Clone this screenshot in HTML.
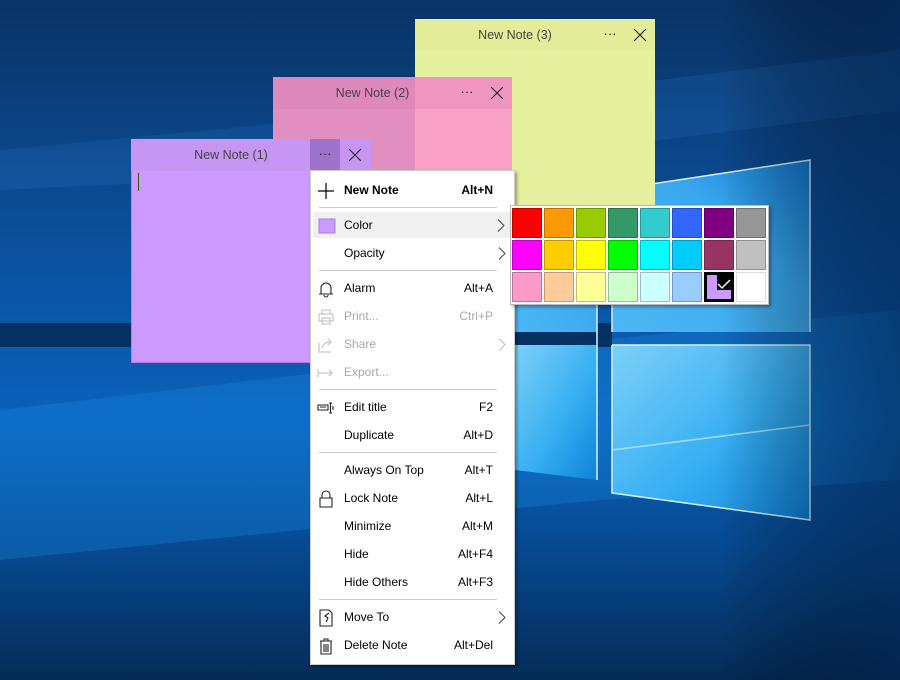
<!DOCTYPE html>
<html><head><meta charset="utf-8"><style>
*{margin:0;padding:0;box-sizing:border-box}
body{width:900px;height:680px;overflow:hidden;position:relative;font-family:"Liberation Sans",sans-serif;background:#0b4a92}
svg.bg{position:absolute;left:0;top:0}
.note{position:absolute}
.hdr{position:absolute;left:0;top:0;right:0;height:32px;font-size:12.5px;color:#444;text-align:center;line-height:32px}
.hdr .t{position:absolute;left:0;right:40px;text-align:center}
.btn{position:absolute;top:0;width:30px;height:32px;line-height:30px;text-align:center;font-size:13px;color:#222}
.btn svg{position:absolute;left:9px;top:10px}
.menu{position:absolute;left:310px;top:170px;width:205px;height:495px;background:#fff;border:1px solid #ccc;box-shadow:2px 2px 3px rgba(0,0,0,.35)}
.it{position:absolute;left:0;width:203px;height:26px;font-size:12px;color:#000;line-height:26px}
.it .l{position:absolute;left:33px}
.it .r{position:absolute;right:21px}
.it.dis{color:#a8a8a8}
.it svg{position:absolute;left:6px;top:5px}
.it svg.ch{left:auto;right:8px;top:7px}
.sep{position:absolute;left:8px;width:178px;height:1px;background:#ccc}
.pal{position:absolute;left:510px;top:205px;width:259px;height:100px;background:#fff;border:1px solid #bbb;box-shadow:2px 2px 3px rgba(0,0,0,.35)}
.c{position:absolute;width:30px;height:30px;border:1px solid rgba(0,0,0,.25)}
</style></head><body>
<svg class="bg" width="900" height="680" viewBox="0 0 900 680">
<defs>
<linearGradient id="g0" x1="0" y1="0" x2="0" y2="1">
<stop offset="0" stop-color="#0a3366"/><stop offset=".3" stop-color="#0b4c94"/><stop offset=".62" stop-color="#0a62bc"/><stop offset=".8" stop-color="#074a92"/><stop offset="1" stop-color="#052b56"/></linearGradient>
<linearGradient id="gr" x1="0" y1="0" x2="1" y2="0">
<stop offset="0" stop-color="#000" stop-opacity="0"/><stop offset=".8" stop-color="#000" stop-opacity="0"/><stop offset="1" stop-color="#03224a" stop-opacity=".6"/></linearGradient>
<linearGradient id="pane" x1="0" y1="1" x2="1" y2="0">
<stop offset="0" stop-color="#4cb8f5"/><stop offset=".6" stop-color="#3aa8ee"/><stop offset="1" stop-color="#1478cc"/></linearGradient>
<linearGradient id="pane2" x1="0" y1="0" x2="1" y2="1">
<stop offset="0" stop-color="#7dd0f8"/><stop offset=".55" stop-color="#38b0f2"/><stop offset="1" stop-color="#0d82d8"/></linearGradient>
</defs>
<rect width="900" height="680" fill="url(#g0)"/>
<polygon points="0,150 420,110 900,50 900,110 420,170 0,190" fill="#2a7fd0" opacity=".18"/>
<polygon points="0,410 600,340 900,310 900,480 600,500 0,560" fill="#1a8ae2" opacity=".3"/>
<rect x="0" y="323" width="612" height="24" fill="#052a55" opacity=".85"/>
<polygon points="515,205 597,190 597,332 515,332" fill="url(#pane)"/>
<polygon points="612,190 810,160 810,332 612,332" fill="url(#pane)"/>
<polygon points="515,345 597,345 597,480 515,470" fill="url(#pane2)"/>
<polygon points="612,345 810,345 810,520 612,493" fill="url(#pane2)"/>
<polyline points="612,332 612,190 810,160 810,332" fill="none" stroke="#d8f2ff" stroke-width="1.5"/>
<polyline points="612,345 810,345 810,520 612,493 612,345" fill="none" stroke="#d8f2ff" stroke-width="1.5"/>
<line x1="597" y1="190" x2="597" y2="480" stroke="#d8f2ff" stroke-width="1.5"/>
<line x1="612" y1="450" x2="810" y2="425" stroke="#bfe8ff" stroke-width="1.5" opacity=".8"/>
<rect width="900" height="680" fill="url(#gr)"/>
</svg>

<!-- Note 3 -->
<div class="note" style="left:415px;top:19px;width:240px;height:200px;background:#e6f1a0">
<div class="hdr" style="background:#e3ec98"><span class="t">New Note (3)</span>
<span class="btn" style="left:180px">···</span><span class="btn" style="left:210px"><svg width="12" height="12"><path d="M0 0L12 12M12 0L0 12" stroke="#222" stroke-width="1.1"/></svg></span></div></div>
<!-- Note 2 -->
<div class="note" style="left:273px;top:77px;width:239px;height:130px;background:#f9a1c4">
<div style="position:absolute;left:0;top:0;width:142px;height:130px;background:#e18ec0"></div>
<div class="hdr" style="background:rgba(220,120,170,.25)"><span class="t">New Note (2)</span>
<span class="btn" style="left:179px">···</span><span class="btn" style="left:209px"><svg width="12" height="12"><path d="M0 0L12 12M12 0L0 12" stroke="#222" stroke-width="1.1"/></svg></span></div></div>
<!-- Note 1 -->
<div class="note" style="left:131px;top:139px;width:240px;height:224px;background:#cc99ff;border:1px solid #b27ee0">
<div class="hdr" style="background:#c696f2;top:-1px;left:-1px;right:-1px"><span class="t">New Note (1)</span>
<span class="btn" style="left:179px;background:#9d74c9">···</span><span class="btn" style="left:209px"><svg width="12" height="12"><path d="M0 0L12 12M12 0L0 12" stroke="#222" stroke-width="1.1"/></svg></span></div>
<div style="position:absolute;left:6px;top:33px;width:1px;height:18px;background:#335500"></div>
</div>

<div class="menu">
<div class="it" style="top:6px;font-weight:bold"><svg width="18" height="18"><path d="M9 1v16M1 9h16" stroke="#000" stroke-width="1.2"/></svg><span class="l">New Note</span><span class="r">Alt+N</span></div>
<div class="sep" style="top:36px"></div>
<div class="it" style="top:41px;background:#f0f0f0;left:2px;width:198px"><svg width="18" height="18" style="left:5px"><rect x="1" y="2" width="16" height="14" fill="#cc99ff" stroke="#a87fe0"/></svg><span class="l" style="left:31px">Color</span><svg class="ch" width="8" height="13" style="right:6px"><path d="M1 0.5L7 6.5L1 12.5" fill="none" stroke="#444"/></svg></div>
<div class="it" style="top:69px"><span class="l">Opacity</span><svg class="ch" width="8" height="13"><path d="M1 0.5L7 6.5L1 12.5" fill="none" stroke="#444"/></svg></div>
<div class="sep" style="top:99px"></div>
<div class="it" style="top:104px"><svg width="18" height="18"><path d="M4 14V8a5 5 0 0 1 10 0v6zM2 14h14M7 15a2 2 0 0 0 4 0" fill="none" stroke="#222" stroke-width="1.1"/></svg><span class="l">Alarm</span><span class="r">Alt+A</span></div>
<div class="it dis" style="top:132px"><svg width="18" height="18"><path d="M5 6V2h8v4M2 6h14v7H2zM5 10h8v6H5z" fill="none" stroke="#bbb"/></svg><span class="l">Print...</span><span class="r">Ctrl+P</span></div>
<div class="it dis" style="top:160px"><svg width="18" height="18"><path d="M2 7v9h12M5 12c1-5 5-6 9-6M11 3l3 3-3 3" fill="none" stroke="#bbb"/></svg><span class="l">Share</span><svg class="ch" width="8" height="13"><path d="M1 0.5L7 6.5L1 12.5" fill="none" stroke="#bbb"/></svg></div>
<div class="it dis" style="top:188px"><svg width="18" height="18"><path d="M1 5v8M1 9h15M12 6l3 3-3 3" fill="none" stroke="#bbb"/></svg><span class="l">Export...</span></div>
<div class="sep" style="top:218px"></div>
<div class="it" style="top:223px"><svg width="18" height="18"><path d="M1 6h10v5H1zM3 8h6M12 4h3M13.5 4v10M12 14h3M16 7v4" fill="none" stroke="#222" stroke-width="1.1"/></svg><span class="l">Edit title</span><span class="r">F2</span></div>
<div class="it" style="top:251px"><span class="l">Duplicate</span><span class="r">Alt+D</span></div>
<div class="sep" style="top:281px"></div>
<div class="it" style="top:286px"><span class="l">Always On Top</span><span class="r">Alt+T</span></div>
<div class="it" style="top:314px"><svg width="18" height="18"><path d="M3 8h12v9H3zM5 8V5a4 4 0 0 1 8 0v3" fill="none" stroke="#222" stroke-width="1.1"/></svg><span class="l">Lock Note</span><span class="r">Alt+L</span></div>
<div class="it" style="top:342px"><span class="l">Minimize</span><span class="r">Alt+M</span></div>
<div class="it" style="top:370px"><span class="l">Hide</span><span class="r">Alt+F4</span></div>
<div class="it" style="top:398px"><span class="l">Hide Others</span><span class="r">Alt+F3</span></div>
<div class="sep" style="top:428px"></div>
<div class="it" style="top:433px"><svg width="18" height="18"><path d="M3 1h9l3 3v13H3zM12 4l-4 3 3 2-2 4" fill="none" stroke="#222" stroke-width="1.1"/></svg><span class="l">Move To</span><svg class="ch" width="8" height="13"><path d="M1 0.5L7 6.5L1 12.5" fill="none" stroke="#444"/></svg></div>
<div class="it" style="top:461px"><svg width="18" height="18"><path d="M3 4h12M7 4V2h4v2M4 4v13h10V4M7 7v8M9 7v8M11 7v8" fill="none" stroke="#222" stroke-width="1.1"/></svg><span class="l">Delete Note</span><span class="r">Alt+Del</span></div>
</div>

<div class="pal">
<div class="c" style="left:1px;top:2px;background:#ff0000"></div>
<div class="c" style="left:33px;top:2px;background:#ff9900"></div>
<div class="c" style="left:65px;top:2px;background:#99cc00"></div>
<div class="c" style="left:97px;top:2px;background:#339966"></div>
<div class="c" style="left:129px;top:2px;background:#33cccc"></div>
<div class="c" style="left:161px;top:2px;background:#3366ff"></div>
<div class="c" style="left:193px;top:2px;background:#800080"></div>
<div class="c" style="left:225px;top:2px;background:#969696"></div>
<div class="c" style="left:1px;top:34px;background:#ff00ff"></div>
<div class="c" style="left:33px;top:34px;background:#ffcc00"></div>
<div class="c" style="left:65px;top:34px;background:#ffff00"></div>
<div class="c" style="left:97px;top:34px;background:#00ff00"></div>
<div class="c" style="left:129px;top:34px;background:#00ffff"></div>
<div class="c" style="left:161px;top:34px;background:#00ccff"></div>
<div class="c" style="left:193px;top:34px;background:#993366"></div>
<div class="c" style="left:225px;top:34px;background:#c0c0c0"></div>
<div class="c" style="left:1px;top:66px;background:#ff99cc"></div>
<div class="c" style="left:33px;top:66px;background:#ffcc99"></div>
<div class="c" style="left:65px;top:66px;background:#ffff99"></div>
<div class="c" style="left:97px;top:66px;background:#ccffcc"></div>
<div class="c" style="left:129px;top:66px;background:#ccffff"></div>
<div class="c" style="left:161px;top:66px;background:#99ccff"></div>
<div class="c" style="left:193px;top:66px;background:#000;border:none">
<svg width="30" height="30"><path d="M3 3h10v15h14v9H3z" fill="#cc99ff"/><path d="M14 12l4 4 8-8" fill="none" stroke="#fff" stroke-width="1.5"/></svg></div>
<div class="c" style="left:225px;top:66px;background:#fff;border-color:#ddd"></div>
</div>
</body></html>
